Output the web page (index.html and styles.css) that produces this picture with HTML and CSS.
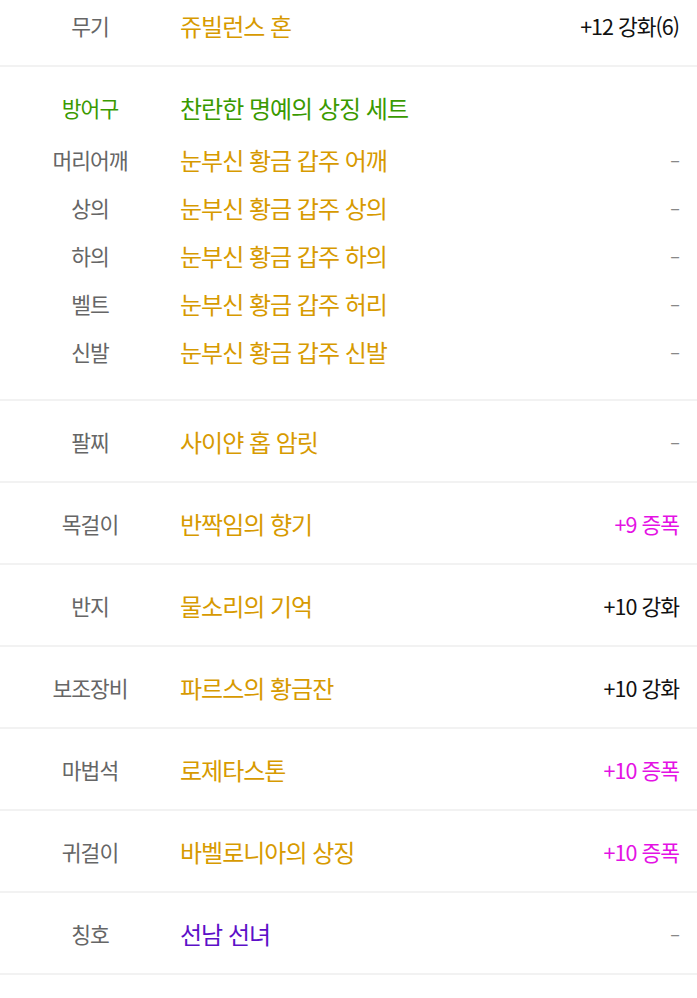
FILE: index.html
```html
<!DOCTYPE html>
<html lang="ko">
<head>
    <meta charset="UTF-8">
    <meta name="viewport" content="width=device-width, initial-scale=1.0">
    <title>장비 정보</title>
    <link rel="stylesheet" href="styles.css">
</head>
<body>
    <ul class="equipList">
        <li class="row">
            <span class="slot">무기</span>
            <span class="item gold">쥬빌런스 혼</span>
            <span class="info">+12 강화(6)</span>
        </li>

        <li class="setBox">
            <div class="setRow">
                <span class="slot green">방어구</span>
                <span class="item green">찬란한 명예의 상징 세트</span>
                <span class="info"></span>
            </div>
            <div class="subRow">
                <span class="slot">머리어깨</span>
                <span class="item gold">눈부신 황금 갑주 어깨</span>
                <span class="info dash">–</span>
            </div>
            <div class="subRow">
                <span class="slot">상의</span>
                <span class="item gold">눈부신 황금 갑주 상의</span>
                <span class="info dash">–</span>
            </div>
            <div class="subRow">
                <span class="slot">하의</span>
                <span class="item gold">눈부신 황금 갑주 하의</span>
                <span class="info dash">–</span>
            </div>
            <div class="subRow">
                <span class="slot">벨트</span>
                <span class="item gold">눈부신 황금 갑주 허리</span>
                <span class="info dash">–</span>
            </div>
            <div class="subRow">
                <span class="slot">신발</span>
                <span class="item gold">눈부신 황금 갑주 신발</span>
                <span class="info dash">–</span>
            </div>
        </li>

        <li class="row">
            <span class="slot">팔찌</span>
            <span class="item gold">사이얀 홉 암릿</span>
            <span class="info dash">–</span>
        </li>
        <li class="row">
            <span class="slot">목걸이</span>
            <span class="item gold">반짝임의 향기</span>
            <span class="info pink">+9 증폭</span>
        </li>
        <li class="row">
            <span class="slot">반지</span>
            <span class="item gold">물소리의 기억</span>
            <span class="info">+10 강화</span>
        </li>
        <li class="row">
            <span class="slot">보조장비</span>
            <span class="item gold">파르스의 황금잔</span>
            <span class="info">+10 강화</span>
        </li>
        <li class="row">
            <span class="slot">마법석</span>
            <span class="item gold">로제타스톤</span>
            <span class="info pink">+10 증폭</span>
        </li>
        <li class="row">
            <span class="slot">귀걸이</span>
            <span class="item gold">바벨로니아의 상징</span>
            <span class="info pink">+10 증폭</span>
        </li>
        <li class="row">
            <span class="slot">칭호</span>
            <span class="item purple">선남 선녀</span>
            <span class="info dash">–</span>
        </li>
    </ul>
</body>
</html>
```

FILE: styles.css
```css
body {
    margin: 0;
    background-color: #fff;
    font-family: "Noto Sans CJK KR", "Noto Sans", sans-serif;
}

.equipList {
    list-style: none;
    margin: -15px 0 0 0;
    padding: 0;
}

.equipList > li {
    border-bottom: 2px solid #f2f2f2;
}

.row, .setRow, .subRow {
    display: grid;
    grid-template-columns: 180px 1fr auto;
    align-items: center;
    padding-right: 18px;
}

.row {
    height: 80px;
}

.setBox {
    padding: 16px 0 24px 0;
}

.setRow {
    height: 48px;
    margin-bottom: 4px;
}

.subRow {
    height: 48px;
}

.slot {
    text-align: center;
    color: #666;
    font-size: 21.5px;
    letter-spacing: -1px;
}

.item {
    font-size: 24px;
    letter-spacing: -1px;
}

.info {
    text-align: right;
    color: #111;
    font-size: 21.5px;
    letter-spacing: -1px;
}

.gold { color: #d79a00; }
.green { color: #3a9a00; }
.purple { color: #5d0fc8; }
.pink { color: #e412e4; }
.dash { color: #888; font-size: 18px; }
```
